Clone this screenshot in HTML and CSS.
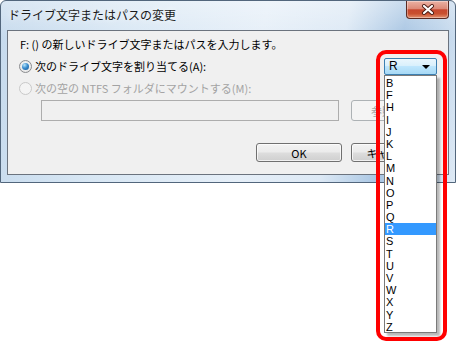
FILE: index.html
```html
<!DOCTYPE html>
<html lang="ja">
<head>
<meta charset="utf-8">
<link rel="stylesheet" href="styles.css">
</head>
<body>
<div class="window">
  <div class="titlebar">
    <span class="title">ドライブ文字またはパスの変更</span>
    <div class="close">
      <svg width="14" height="11" viewBox="0 0 14 11">
        <path d="M3 2 L11 9 M11 2 L3 9" stroke="#4a1c14" stroke-width="4" stroke-linecap="round"/>
        <path d="M3 2 L11 9 M11 2 L3 9" stroke="#ffffff" stroke-width="2.2" stroke-linecap="round"/>
      </svg>
    </div>
  </div>
  <div class="panel">
    <div class="prompt">F: () の新しいドライブ文字またはパスを入力します。</div>
    <div class="option"><span class="radio checked"></span><span>次のドライブ文字を割り当てる(A):</span></div>
    <div class="option disabled"><span class="radio"></span><span>次の空の NTFS フォルダにマウントする(M):</span></div>
    <div class="pathrow">
      <div class="pathbox"></div>
      <div class="btn btn-disabled">参照(B)...</div>
    </div>
    <div class="actions">
      <div class="btn">OK</div>
      <div class="btn">キャンセル</div>
    </div>
  </div>
</div>

<div class="dropdown">
  <div class="combo"><span>R</span><span class="arrow"></span></div>
  <ul class="list">
    <li>B</li><li>F</li><li>H</li><li>I</li><li>J</li><li>K</li><li>L</li>
    <li>M</li><li>N</li><li>O</li><li>P</li><li>Q</li><li class="sel">R</li><li>S</li>
    <li>T</li><li>U</li><li>V</li><li>W</li><li>X</li><li>Y</li><li>Z</li>
  </ul>
</div>
<div class="callout"></div>
</body>
</html>
```

FILE: styles.css
```css
* { box-sizing: border-box; }

body {
  margin: 0;
  background: #ffffff;
  font-family: "Noto Sans CJK JP", "Noto Sans", sans-serif;
  font-size: 11px;
  color: #000;
}

.window {
  width: 456px;
  height: 183px;
  border: 1px solid #52667c;
  border-radius: 6px 6px 0 0;
  padding: 0 6px 7px 6px;
  background:
    linear-gradient(180deg, rgba(255,255,255,0.35) 0%, rgba(255,255,255,0) 20%),
    linear-gradient(100deg, #c6daed 0%, #d8e7f4 25%, #e6eff8 55%, #dde9f5 72%, #a9c6e3 84%, #bcd3ea 91%, #dfeaf5 100%);
  display: flex;
  flex-direction: column;
}

.titlebar {
  height: 29px;
  display: flex;
  justify-content: space-between;
  align-items: flex-start;
}

.title {
  font-size: 12px;
  line-height: 14px;
  margin-top: 7px;
  margin-left: 1px;
  color: #1a1a1a;
  text-shadow: 0 0 6px rgba(255,255,255,0.9);
}

.close {
  width: 43px;
  height: 18px;
  border: 1px solid #5a2a22;
  border-top: none;
  border-radius: 0 0 4px 4px;
  background: linear-gradient(180deg, #ebb2a4 0%, #dd8a78 45%, #c7472e 52%, #c9502f 75%, #e39170 100%);
  display: flex;
  align-items: center;
  justify-content: center;
  box-shadow: inset 0 0 0 1px rgba(255,255,255,0.35);
}

.panel {
  flex: 1;
  background: #f0f0f0;
  border: 1px solid #6b737e;
  padding: 6px 11px 0 11px;
  display: flex;
  flex-direction: column;
}

.prompt {
  line-height: 14px;
  height: 14px;
  margin-left: 1px;
  white-space: nowrap;
}

.option {
  margin-top: 8px;
  height: 14px;
  line-height: 14px;
  display: flex;
  align-items: center;
  gap: 3px;
  white-space: nowrap;
}

.option.disabled { color: #a3a3a3; }

.radio {
  width: 13px;
  height: 13px;
  border-radius: 50%;
  border: 1px solid #8a8c8f;
  background: radial-gradient(circle at 50% 45%, #ffffff 0%, #e8e8e8 70%, #d4d4d4 100%);
  display: flex;
  align-items: center;
  justify-content: center;
  flex: none;
}

.radio.checked::after {
  content: "";
  width: 7px;
  height: 7px;
  border-radius: 50%;
  background: radial-gradient(circle at 35% 30%, #b9e6fb 0%, #3d8fd0 45%, #10508f 100%);
}

.disabled .radio {
  border-color: #c9c9c9;
  background: #f4f4f4;
}

.pathrow {
  margin-top: 5px;
  height: 21px;
  display: flex;
  gap: 12px;
  padding-left: 22px;
}

.pathbox {
  flex: 1;
  border: 1px solid #adadad;
  background: #f0f0f0;
}

.btn {
  width: 86px;
  height: 19px;
  border: 1px solid #707070;
  border-radius: 3px;
  background: linear-gradient(180deg, #f3f3f3 0%, #ebebeb 48%, #dddddd 52%, #cfcfcf 100%);
  display: flex;
  align-items: center;
  justify-content: center;
  line-height: 14px;
  white-space: nowrap;
  box-shadow: inset 0 0 0 1px rgba(255,255,255,0.7);
}

.btn-disabled {
  height: 21px;
  border-color: #adb2b5;
  background: #f4f4f4;
  color: #a3a3a3;
  box-shadow: none;
}

.actions {
  margin-top: 22px;
  display: flex;
  justify-content: flex-end;
  gap: 9px;
}

/* open drop-down list (overlay) */
.dropdown {
  position: absolute;
  left: 384px;
  top: 58px;
  width: 53px;
  font-family: "Liberation Sans", "Noto Sans", sans-serif;
  font-size: 11px;
}

.combo {
  height: 17px;
  border: 1px solid #3c7fb1;
  border-radius: 2px;
  background: linear-gradient(180deg, #eaf6fd 0%, #d9f0fc 45%, #bee6fd 50%, #a7d9f5 100%);
  display: flex;
  align-items: center;
  justify-content: space-between;
  padding: 0 6px 0 4px;
  line-height: 15px;
  font-size: 12px;
}

.arrow {
  width: 0;
  height: 0;
  border-left: 4px solid transparent;
  border-right: 4px solid transparent;
  border-top: 4px solid #000;
}

.list {
  list-style: none;
  margin: 0;
  padding: 1px 0 2px 0;
  height: 258px;
  background: #fff;
  border: 1px solid #7a7a7a;
  box-shadow: 3px 3px 2px rgba(0,0,0,0.28);
}

.list li {
  height: 12.2px;
  line-height: 12px;
  padding-left: 1px;
}

.list li.sel {
  background: #3399ff;
  color: #fff;
}

.callout {
  position: absolute;
  left: 376px;
  top: 50px;
  width: 71px;
  height: 291px;
  border: 4px solid #ff0000;
  border-radius: 10px;
}
```
